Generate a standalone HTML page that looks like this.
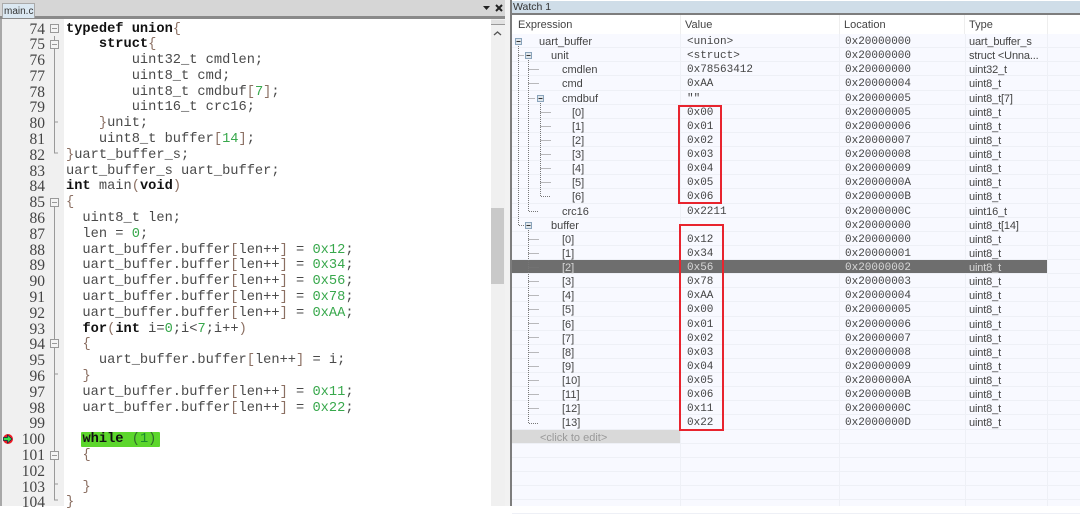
<!DOCTYPE html>
<html><head><meta charset="utf-8">
<style>
html,body{margin:0;padding:0;width:1080px;height:506px;overflow:hidden;background:#fff}
#top{position:absolute;left:0;top:0;width:505px;height:16px;background:#d6d6d6}
#topl{position:absolute;left:0;top:16px;width:505px;height:3px;background:#8a8a8a}
#tab{position:absolute;left:2px;top:3px;width:31px;height:14px;background:#dbe8f2;border:1px solid #aaa;border-bottom:none;font:10px/15px "Liberation Sans",sans-serif;color:#333;box-sizing:content-box;padding-left:0;text-indent:1px}
#gut{position:absolute;left:0;top:19px;width:64px;height:487px;background:#f0f0f0;border-left:2px solid #a8a8a8;box-sizing:border-box}
pre{margin:0;font-family:"Liberation Mono",monospace;font-size:13.7px;line-height:15.8px;color:#4a4a4a;position:absolute;filter:blur(.3px)}
#nums{left:0;top:21.5px;width:45px;text-align:right;font-family:"Liberation Serif",serif;font-size:15.5px;color:#444}
#code{left:66px;top:21.5px}
b{color:#111}
i{font-style:normal;color:#38a84c}
u{text-decoration:none;color:#8b6f62}
#hl{position:absolute;left:81px;top:432px;width:79px;height:15px;background:#5cd62c;border-radius:1px}
#sb{position:absolute;left:491px;top:19px;width:14px;height:487px;background:#f0f0f0}
#cr{position:absolute;left:491px;top:20px;width:14px;height:5px;background:#e2e2e2;border-bottom:1px solid #999;box-sizing:border-box}
#th{position:absolute;left:491px;top:208px;width:13px;height:76px;background:#c9c9c9}
#sp{position:absolute;left:505px;top:0;width:5px;height:506px;background:#f2f2f2}
#spl{position:absolute;left:510px;top:0;width:2px;height:506px;background:#7d7d7d}
#wt{position:absolute;left:512px;top:1px;width:568px;height:12px;background:#cfdde8;font:10.5px/12px "Liberation Sans",sans-serif;color:#333;text-indent:1px}
#wl{position:absolute;left:512px;top:13px;width:568px;height:2px;background:#7d7d7d}
#wh{position:absolute;left:512px;top:15px;width:568px;height:19px;background:#fff;font:11px/19px "Liberation Sans",sans-serif;color:#444}
#wh span{position:absolute;top:1px}
#wh s{position:absolute;top:0;height:19px;width:1px;background:#eee;text-decoration:none}
#wb{position:absolute;left:512px;top:34px;width:568px;height:472px;background:#f8f9ff}
#wr{filter:blur(.25px)}
.r{position:relative;height:14.14px;box-sizing:border-box;border-bottom:1px solid #eef0f6;font:11px/14px "Liberation Sans",sans-serif;color:#444;white-space:nowrap}
.r span{position:absolute;top:1px;font-family:"Liberation Sans",sans-serif}
.r .v,.r .l{font-family:"Liberation Mono",monospace}
.v{left:175px}
.l{left:333px}
.t{left:457px;letter-spacing:-.15px}
.sel{background:linear-gradient(#6e6e6e,#6e6e6e) no-repeat;background-size:535px 100%;color:#d8d8d8}
.col{position:absolute;top:0;width:1px;height:472px;background:#eef0f6}
#box1,#box2{position:absolute;border:2px solid #e8242e;box-sizing:border-box}
svg{position:absolute;left:0;top:0}
</style></head><body>
<div id="top"></div><div id="topl"></div><div id="tab">main.c</div>
<div id="gut"></div>
<div id="hl"></div>
<pre id="nums">74
75
76
77
78
79
80
81
82
83
84
85
86
87
88
89
90
91
92
93
94
95
96
97
98
99
100
101
102
103
104</pre>
<pre id="code"><b>typedef union</b><u>{</u>
    <b>struct</b><u>{</u>
        uint32_t cmdlen;
        uint8_t cmd;
        uint8_t cmdbuf<u>[</u><i>7</i><u>]</u>;
        uint16_t crc16;
    <u>}</u>unit;
    uint8_t buffer<u>[</u><i>14</i><u>]</u>;
<u>}</u>uart_buffer_s;
uart_buffer_s uart_buffer;
<b>int</b> main<u>(</u><b>void</b><u>)</u>
<u>{</u>
  uint8_t len;
  len = <i>0</i>;
  uart_buffer.buffer<u>[</u>len++<u>]</u> = <i>0x12</i>;
  uart_buffer.buffer<u>[</u>len++<u>]</u> = <i>0x34</i>;
  uart_buffer.buffer<u>[</u>len++<u>]</u> = <i>0x56</i>;
  uart_buffer.buffer<u>[</u>len++<u>]</u> = <i>0x78</i>;
  uart_buffer.buffer<u>[</u>len++<u>]</u> = <i>0xAA</i>;
  <b>for</b><u>(</u><b>int</b> i=<i>0</i>;i&lt;<i>7</i>;i++<u>)</u>
  <u>{</u>
    uart_buffer.buffer<u>[</u>len++<u>]</u> = i;
  <u>}</u>
  uart_buffer.buffer<u>[</u>len++<u>]</u> = <i>0x11</i>;
  uart_buffer.buffer<u>[</u>len++<u>]</u> = <i>0x22</i>;

  <b>while</b> <u style="color:#2f6b2a">(</u><span style="color:#1c8a2c">1</span><u style="color:#2f6b2a">)</u>
  <u>{</u>

  <u>}</u>
<u>}</u></pre>
<div id="sb"></div><div id="cr"></div><div id="th"></div><div id="sp"></div><div id="spl"></div>
<div id="wt">Watch 1</div><div id="wl"></div>
<div id="wh"><span style="left:6px">Expression</span><span style="left:173px">Value</span><span style="left:332px">Location</span><span style="left:457px">Type</span><s style="left:168px"></s><s style="left:327px"></s><s style="left:452px"></s><s style="left:535px"></s></div>
<div id="wb">
<div class="col" style="left:168px"></div><div class="col" style="left:327px"></div><div class="col" style="left:453px"></div><div class="col" style="left:535px"></div>
<div id="wr">
<div class="r"><span style="left:27px">uart_buffer</span><span class="v">&lt;union&gt;</span><span class="l">0x20000000</span><span class="t">uart_buffer_s</span></div>
<div class="r"><span style="left:39px">unit</span><span class="v">&lt;struct&gt;</span><span class="l">0x20000000</span><span class="t">struct &lt;Unna...</span></div>
<div class="r"><span style="left:50px">cmdlen</span><span class="v">0x78563412</span><span class="l">0x20000000</span><span class="t">uint32_t</span></div>
<div class="r"><span style="left:50px">cmd</span><span class="v">0xAA</span><span class="l">0x20000004</span><span class="t">uint8_t</span></div>
<div class="r"><span style="left:50px">cmdbuf</span><span class="v">""</span><span class="l">0x20000005</span><span class="t">uint8_t[7]</span></div>
<div class="r"><span style="left:60px">[0]</span><span class="v">0x00</span><span class="l">0x20000005</span><span class="t">uint8_t</span></div>
<div class="r"><span style="left:60px">[1]</span><span class="v">0x01</span><span class="l">0x20000006</span><span class="t">uint8_t</span></div>
<div class="r"><span style="left:60px">[2]</span><span class="v">0x02</span><span class="l">0x20000007</span><span class="t">uint8_t</span></div>
<div class="r"><span style="left:60px">[3]</span><span class="v">0x03</span><span class="l">0x20000008</span><span class="t">uint8_t</span></div>
<div class="r"><span style="left:60px">[4]</span><span class="v">0x04</span><span class="l">0x20000009</span><span class="t">uint8_t</span></div>
<div class="r"><span style="left:60px">[5]</span><span class="v">0x05</span><span class="l">0x2000000A</span><span class="t">uint8_t</span></div>
<div class="r"><span style="left:60px">[6]</span><span class="v">0x06</span><span class="l">0x2000000B</span><span class="t">uint8_t</span></div>
<div class="r"><span style="left:50px">crc16</span><span class="v">0x2211</span><span class="l">0x2000000C</span><span class="t">uint16_t</span></div>
<div class="r"><span style="left:39px">buffer</span><span class="l">0x20000000</span><span class="t">uint8_t[14]</span></div>
<div class="r"><span style="left:50px">[0]</span><span class="v">0x12</span><span class="l">0x20000000</span><span class="t">uint8_t</span></div>
<div class="r"><span style="left:50px">[1]</span><span class="v">0x34</span><span class="l">0x20000001</span><span class="t">uint8_t</span></div>
<div class="r sel"><span style="left:50px">[2]</span><span class="v">0x56</span><span class="l">0x20000002</span><span class="t">uint8_t</span></div>
<div class="r"><span style="left:50px">[3]</span><span class="v">0x78</span><span class="l">0x20000003</span><span class="t">uint8_t</span></div>
<div class="r"><span style="left:50px">[4]</span><span class="v">0xAA</span><span class="l">0x20000004</span><span class="t">uint8_t</span></div>
<div class="r"><span style="left:50px">[5]</span><span class="v">0x00</span><span class="l">0x20000005</span><span class="t">uint8_t</span></div>
<div class="r"><span style="left:50px">[6]</span><span class="v">0x01</span><span class="l">0x20000006</span><span class="t">uint8_t</span></div>
<div class="r"><span style="left:50px">[7]</span><span class="v">0x02</span><span class="l">0x20000007</span><span class="t">uint8_t</span></div>
<div class="r"><span style="left:50px">[8]</span><span class="v">0x03</span><span class="l">0x20000008</span><span class="t">uint8_t</span></div>
<div class="r"><span style="left:50px">[9]</span><span class="v">0x04</span><span class="l">0x20000009</span><span class="t">uint8_t</span></div>
<div class="r"><span style="left:50px">[10]</span><span class="v">0x05</span><span class="l">0x2000000A</span><span class="t">uint8_t</span></div>
<div class="r"><span style="left:50px">[11]</span><span class="v">0x06</span><span class="l">0x2000000B</span><span class="t">uint8_t</span></div>
<div class="r"><span style="left:50px">[12]</span><span class="v">0x11</span><span class="l">0x2000000C</span><span class="t">uint8_t</span></div>
<div class="r"><span style="left:50px">[13]</span><span class="v">0x22</span><span class="l">0x2000000D</span><span class="t">uint8_t</span></div>
<div class="r" style="background:linear-gradient(#d9d9d9,#d9d9d9) no-repeat;background-size:168px 100%;color:#999"><span style="left:28px">&lt;click to edit&gt;</span></div>
<div class="r"></div><div class="r"></div><div class="r"></div><div class="r"></div><div class="r"></div>
</div>
</div>
<div id="box1" style="left:678px;top:105px;width:44px;height:99px"></div>
<div id="box2" style="left:679px;top:224px;width:45px;height:207px"></div>
<svg width="1080" height="506" viewBox="0 0 1080 506">
<g fill="#fff" stroke="#999" stroke-width="1">
<path d="M54.5 36V153H58M54.5 122H58M54.5 202V500H58M54.5 374H58M54.5 484H58" fill="none"/>
<rect x="50.5" y="24.5" width="8" height="8" fill="#f4f4f4"/><rect x="50.5" y="40.5" width="8" height="8" fill="#f4f4f4"/>
<rect x="50.5" y="198.5" width="8" height="8" fill="#f4f4f4"/><rect x="50.5" y="339.5" width="8" height="8" fill="#f4f4f4"/><rect x="50.5" y="451.5" width="8" height="8" fill="#f4f4f4"/>
<path d="M52 28.5H57M52 44.5H57M52 202.5H57M52 343.5H57M52 455.5H57" fill="none"/>
</g>
<circle cx="8" cy="439" r="5" fill="#ee1c24"/>
<path d="M3.5 437.5H7.5V435L12 439L7.5 443V440.5H3.5Z" fill="#35e04a" stroke="#124" stroke-width=".7"/>
<path d="M483 6H490L486.5 10Z" fill="#222"/>
<path d="M496 5L502 11M502 5L496 11" stroke="#222" stroke-width="2"/>
<path d="M494 35L497.5 32L501 35" fill="none" stroke="#555" stroke-width="1.3"/>
<g fill="none" stroke="#777" stroke-width="1" stroke-dasharray="1 1">
<path d="M518.5 46V225.5H524M518.5 55.5H524"/>
<path d="M528.5 60V211.5H539M528.5 69.5H539M528.5 83.5H539M528.5 98.5H535"/>
<path d="M540.5 103V196.5H551M540.5 112.5H551M540.5 126.5H551M540.5 140.5H551M540.5 154.5H551M540.5 168.5H551M540.5 182.5H551"/>
<path d="M528.5 230V423.5H539M528.5 239.5H539M528.5 253.5H539M528.5 267.5H539M528.5 281.5H539M528.5 295.5H539M528.5 309.5H539M528.5 323.5H539M528.5 337.5H539M528.5 352.5H539M528.5 366.5H539M528.5 380.5H539M528.5 394.5H539M528.5 408.5H539"/>
</g>
<g fill="#dfe6ec" stroke="#8aa4bb" stroke-width="1">
<rect x="515.5" y="38.5" width="6" height="6"/><rect x="525.5" y="52.5" width="6" height="6"/><rect x="537.5" y="95.5" width="6" height="6"/><rect x="525.5" y="222.5" width="6" height="6"/>
</g>
<path d="M516.5 41.5H520.5M526.5 55.5H530.5M538.5 98.5H542.5M526.5 225.5H530.5" stroke="#333" stroke-width="1"/>
</svg>
</body></html>
